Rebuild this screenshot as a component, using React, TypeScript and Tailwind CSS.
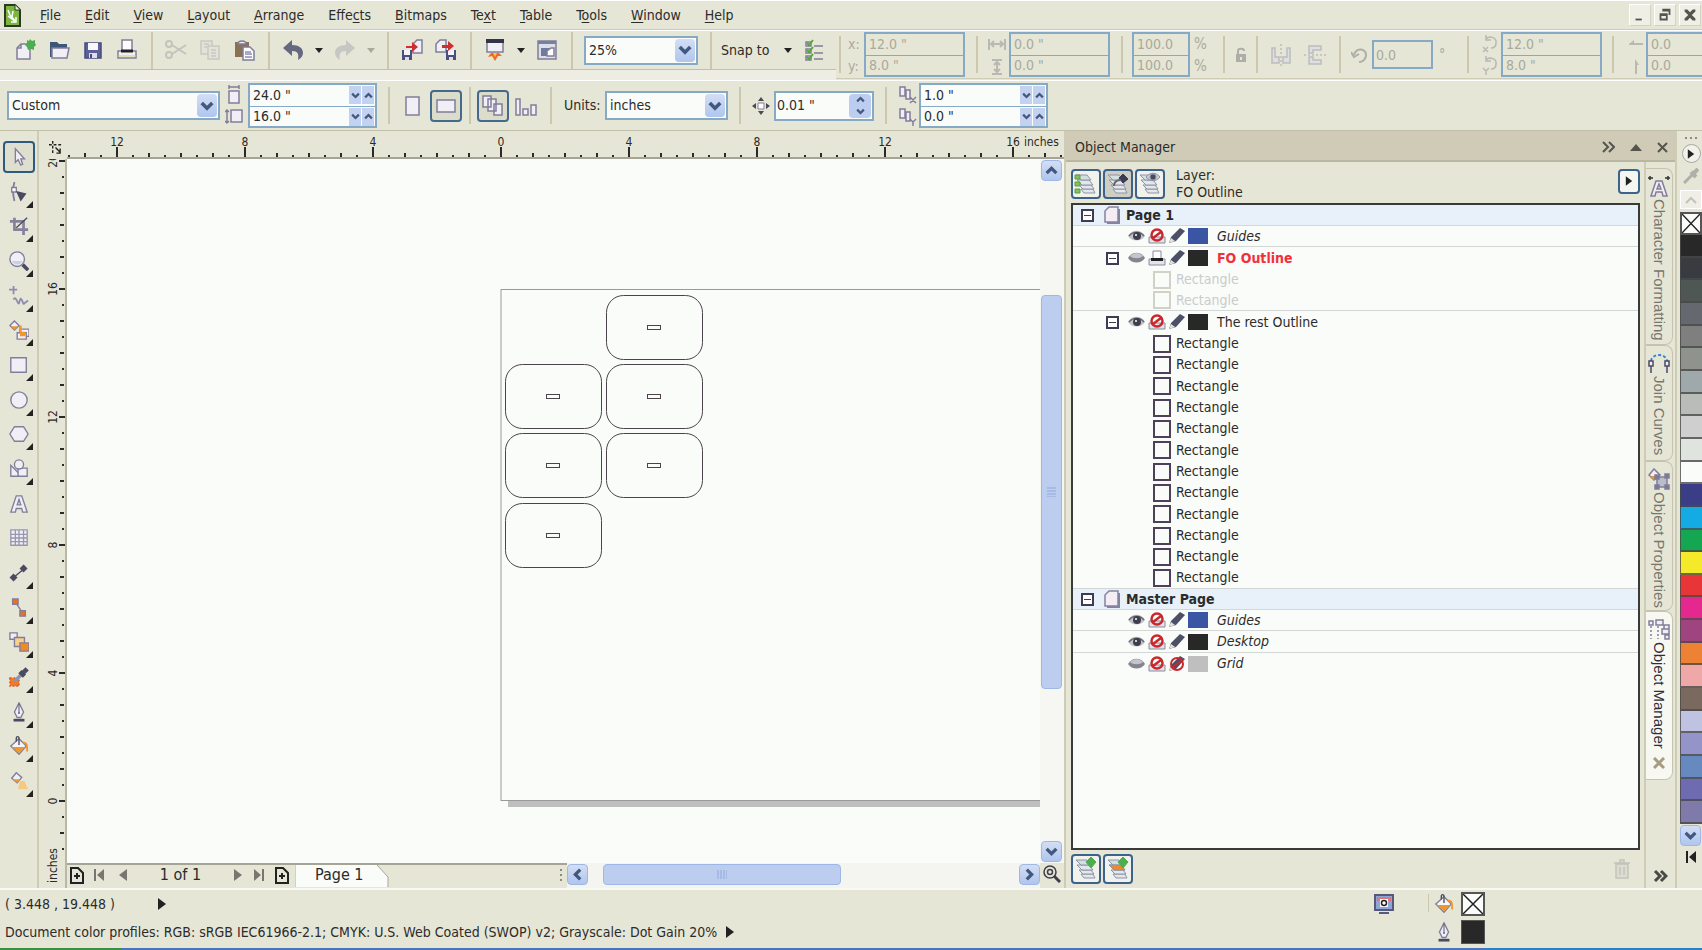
import { Fragment } from "react";
import type { ReactNode } from "react";

const LINE = "#807e99";
const PALE = "#f1eff6";
const DARK = "#4b4a63";

const menus = [
  ["", "F", "ile"],
  ["", "E", "dit"],
  ["", "V", "iew"],
  ["", "L", "ayout"],
  ["", "A", "rrange"],
  ["Effe", "c", "ts"],
  ["", "B", "itmaps"],
  ["Te", "x", "t"],
  ["", "T", "able"],
  ["T", "o", "ols"],
  ["", "W", "indow"],
  ["", "H", "elp"],
];

const palette = [
  "#282828", "#383c41", "#4e5754", "#65686e", "#7f7f7f", "#8f938e", "#9fa8aa", "#b8bdb8", "#cfcfcf",
  "#dfe4df", "#fafcfa", "#3b3e87", "#14aae3", "#15a652", "#f4ea29", "#e73538", "#e4288e", "#a0447f",
  "#ed8134", "#eda8a7", "#79695f", "#bfc3e1", "#9594c8", "#6689c0", "#6e6bb0", "#7e7aa9",
];

type Row = {
  kind: "page" | "layer" | "object";
  name: string;
  open?: boolean;
  eye?: boolean;
  print?: boolean;
  locked?: boolean;
  color?: string;
  look?: string;
  faded?: boolean;
  line?: boolean;
};

const restObjects: Row[] = Array.from({ length: 12 }, (_, i) => ({
  kind: "object",
  name: "Rectangle",
  line: i === 11,
}));

const rows: Row[] = [
  { kind: "page", name: "Page 1", line: true },
  { kind: "layer", name: "Guides", eye: true, color: "#3955a3", look: "italic", line: true },
  { kind: "layer", name: "FO Outline", open: true, print: true, color: "#282828", look: "font-bold text-[#f2303a]" },
  { kind: "object", name: "Rectangle", faded: true },
  { kind: "object", name: "Rectangle", faded: true, line: true },
  { kind: "layer", name: "The rest Outline", open: true, eye: true, color: "#282828", look: "" },
  ...restObjects,
  { kind: "page", name: "Master Page", line: true },
  { kind: "layer", name: "Guides", eye: true, color: "#3955a3", look: "italic", line: true },
  { kind: "layer", name: "Desktop", eye: true, color: "#282828", look: "italic", line: true },
  { kind: "layer", name: "Grid", locked: true, color: "#bfbfbf", look: "italic" },
];

function Ico({ size = 22, children }: { size?: number; children: ReactNode }) {
  return (
    <svg width={size} height={size} viewBox="0 0 22 22" fill={PALE} stroke={LINE} strokeWidth="1.5" className="shrink-0" aria-hidden="true">
      {children}
    </svg>
  );
}

function Sep({ className = "" }: { className?: string }) {
  return (
    <div className={`flex w-[15px] shrink-0 justify-center ${className}`}>
      <div className="h-[37px] w-[2px] bg-[#cbc8ae]" />
    </div>
  );
}

function ToolButton({ label, children, className = "w-[34px]" }: { label: string; children: ReactNode; className?: string }) {
  return (
    <button aria-label={label} className={`flex h-8 shrink-0 items-center justify-center ${className}`}>
      {children}
    </button>
  );
}

function Caret({ color = "#222" }: { color?: string }) {
  return (
    <svg width="8" height="5" viewBox="0 0 8 5" className="shrink-0" aria-hidden="true">
      <path d="M0 0h8L4 5z" fill={color} />
    </svg>
  );
}

function Chevron({ turn = "", size = 12 }: { turn?: string; size?: number }) {
  return (
    <svg width={size} height={size} viewBox="0 0 12 12" className={turn} fill="none" stroke="#42587f" strokeWidth="3" aria-hidden="true">
      <path d="M1.5 3.5L6 8l4.500-4.500" />
    </svg>
  );
}

function Play({ size = 10, flip = false, bar = false, color = "#222" }: { size?: number; flip?: boolean; bar?: boolean; color?: string }) {
  return (
    <svg width={size} height="14" viewBox="0 0 10 14" className={flip ? "rotate-180" : ""} fill={color} aria-hidden="true">
      <path d={bar ? "M0 1l7 6-7 6zM8 1h2v12h-2z" : "M1 1l8 6-8 6z"} />
    </svg>
  );
}

function Combo({ label, value, className }: { label: string; value: string; className: string }) {
  return (
    <div className={`relative h-[29px] shrink-0 border-2 border-[#86a9c6] bg-[#fafcfa] ${className}`}>
      <select aria-label={label} className="h-full w-full appearance-none bg-transparent pl-[3px] outline-none">
        <option>{value}</option>
      </select>
      <span className="pointer-events-none absolute inset-y-px right-px flex w-5 items-center justify-center rounded-sm bg-gradient-to-b from-[#d3def4] to-[#b0c6ee]">
        <Chevron size={14} />
      </span>
    </div>
  );
}

function Pair({ labels, values, className, off = false }: { labels: string[]; values: string[]; className: string; off?: boolean }) {
  return (
    <div className={`shrink-0 border-2 border-[#86a9c6] ${off ? "text-[#aaa99b]" : "bg-[#fafcfa]"} ${className}`}>
      {values.map((value, i) => (
        <div key={labels[i]} className={`flex h-5 items-center ${i ? "mt-px border-t border-[#86a9c6]" : ""}`}>
          <input
            aria-label={labels[i]}
            defaultValue={value}
            disabled={off}
            className="w-0 min-w-0 flex-1 bg-transparent pl-[3px] outline-none"
          />
          {!off && (
            <div className="flex gap-px pr-px">
              <button aria-label={`${labels[i]} down`} className="flex h-[18px] w-3 items-center justify-center bg-[#c3d2f0]">
                <Chevron size={9} />
              </button>
              <button aria-label={`${labels[i]} up`} className="flex h-[18px] w-3 items-center justify-center bg-[#c3d2f0]">
                <Chevron size={9} turn="rotate-180" />
              </button>
            </div>
          )}
        </div>
      ))}
    </div>
  );
}

function Layers({ children }: { children?: ReactNode }) {
  return (
    <svg width="24" height="24" viewBox="0 0 24 24" fill="#e3e7ea" stroke="#8d93a8" strokeWidth="1" aria-hidden="true">
      <path d="M7 17h12l2 4H10z" />
      <path d="M5 13h12l3 4H9z" />
      <path d="M3 8h12l4 5H8z" />
      <path d="M2 3h11l4 5H7z" fill="#d3e0e2" />
      {children}
    </svg>
  );
}

const smallDisk = (
  <g stroke="none">
    <path d="M0 0h10v10H0z" fill="#4a4f7d" />
    <path d="M2 0h6v5H2z" fill="#f4f4fa" />
    <path d="M3 7h4v3H3z" fill="#dcdcea" />
  </g>
);

const bucket = (
  <>
    <path d="M2 11l9-8 8 8-8 9z" fill="#f5f5fa" />
    <path d="M3 12h15l-7 7z" fill="#f0962a" stroke="none" />
    <path d="M11 10V3c0-3-3-3-3 0v3" fill="none" stroke={DARK} />
    <path d="M15 7c5 0 5 3 5 10" fill="none" stroke="#f0962a" strokeWidth="2" />
  </>
);

const nib = (
  <>
    <path d="M11 1l5 10-3 6H9l-3-6z" />
    <path d="M11 2v9" stroke={DARK} strokeWidth="1" />
    <circle cx="11" cy="12" r="1" fill={DARK} stroke="none" />
    <path d="M5 20h12" stroke={DARK} strokeWidth="3" />
  </>
);

const gripDots = (
  <svg width="14" height="4" fill="#8c8a7c" aria-hidden="true">
    <path d="M1 1h2v2H1zM6 1h2v2H6zM11 1h2v2h-2z" />
  </svg>
);

function MenuBar() {
  return (
    <nav className="flex h-[30px] shrink-0 items-center border-t border-b border-t-white border-b-[#cfccb6] pl-1">
      <svg width="17" height="23" viewBox="0 0 17 23" className="mr-[19px]" aria-hidden="true">
        <path d="M1 1h10l5 5v16H1z" fill="#7cb642" stroke="#2c3a23" strokeWidth="2" />
        <path d="M11 1v5h5" fill="#e9f3dc" stroke="#2c3a23" />
        <path d="M4 6l2 5 6 7M9 7l-1 6M4 12l8 6M12 13v5H7" fill="none" stroke="#fff" strokeWidth="1.500" />
      </svg>
      <div className="flex flex-1 gap-6">
        {menus.map(([a, b, c]) => (
          <button key={a + b + c} className="whitespace-pre">
            {a}
            <span className="underline underline-offset-2">{b}</span>
            {c}
          </button>
        ))}
      </div>
      <div className="flex gap-[3px] pr-px">
        {[
          ["Minimize", "M5 14h7v2H5z"],
          ["Restore", "M7 3h9v7h-2V6H7zM4 8h9v8H4zM6 11v3h5v-3z"],
          ["Close", "M4 4h3l3 3 3-3h3v2l-4 4 4 4v2h-3l-3-3-3 3H4v-2l4-4-4-4z"],
        ].map(([name, d]) => (
          <button key={name} aria-label={name} className="flex size-[22px] items-center justify-center border border-[#d5d2c4] border-t-white border-l-white bg-[#f0efe6]">
            <svg width="18" height="18" viewBox="0 0 20 20" fill="#55554d" fillRule="evenodd" aria-hidden="true">
              <path d={d} />
            </svg>
          </button>
        ))}
      </div>
    </nav>
  );
}

function StandardBar() {
  return (
    <div className="flex h-10 items-center border-t border-b border-t-white border-b-[#c3c0aa] pl-2">
      <ToolButton label="New">
        <Ico>
          <path d="M3 9l4-4h9v15H3z" />
          <path d="M7 5v4H3" fill="none" />
          <path d="M16 0l2 2 3-1v3l1 2-2 2v3l-3-1-3 1-1-3-2-2 2-2 0-3 2 1z" fill="#4cae50" stroke="none" />
        </Ico>
      </ToolButton>
      <ToolButton label="Open">
        <Ico>
          <path d="M2 3h7l2 2h8v13H2z" fill="#3d5578" stroke="none" />
          <path d="M4 9h17l-2 10H4z" />
        </Ico>
      </ToolButton>
      <ToolButton label="Save">
        <Ico>
          <path d="M3 4h16v15H3z" fill="#5c6299" stroke="#474c7c" />
          <path d="M6 4h10v7H6z" fill="#f7f7fc" stroke="none" />
          <path d="M7 14h8v5H7z" fill="#dcdcea" stroke="none" />
          <path d="M8 15h2v4H8z" fill="#474c7c" stroke="none" />
        </Ico>
      </ToolButton>
      <ToolButton label="Print">
        <Ico>
          <path d="M6 1h10v12H6z" fill="#fdfdff" />
          <path d="M2 12h18v7H2z" />
          <path d="M5 12h12" stroke="#222" strokeWidth="3" />
          <path d="M2 17h18" stroke="#d8cf6a" strokeWidth="1" />
        </Ico>
      </ToolButton>
      <Sep />
      <ToolButton label="Cut">
        <Ico>
          <g fill="none" stroke="#c4c4bc" strokeWidth="2">
            <circle cx="4" cy="5" r="3" />
            <circle cx="4" cy="16" r="3" />
            <path d="M7 6l14 9M7 15l14-9" />
          </g>
        </Ico>
      </ToolButton>
      <ToolButton label="Copy">
        <Ico>
          <g fill="#e3e3da" stroke="#c9c9c0">
            <path d="M2 2h11v13H2z" />
            <path d="M9 7h11v13H9z" />
            <path d="M12 11h5M12 14h5M12 17h5M5 5h5M5 8h3" />
          </g>
        </Ico>
      </ToolButton>
      <ToolButton label="Paste">
        <Ico>
          <path d="M2 3h14v15H2z" fill="#8a7152" stroke="none" />
          <path d="M5 5c0-4 8-4 8 0z" fill="#eee" />
          <path d="M10 8h7l4 4v9H10z" fill="#fbfbff" />
          <path d="M12 13h6M12 15h7M12 18h7" stroke="#555b8d" strokeWidth="1" />
        </Ico>
      </ToolButton>
      <Sep />
      <ToolButton label="Undo">
        <Ico>
          <path d="M1 9l9-8v5c7 0 11 3 11 8 0 3-2 5-5 7 1-6 0-9-6-9v5z" fill="#666880" stroke="none" />
        </Ico>
      </ToolButton>
      <ToolButton label="Undo list" className="w-[18px]">
        <Caret />
      </ToolButton>
      <ToolButton label="Redo">
        <Ico>
          <path d="M21 9l-9-8v5C5 6 1 9 1 14c0 3 2 5 5 7-1-6 0-9 6-9v5z" fill="#c6c7c2" stroke="none" />
        </Ico>
      </ToolButton>
      <ToolButton label="Redo list" className="w-[18px]">
        <Caret color="#aaa99b" />
      </ToolButton>
      <Sep />
      <ToolButton label="Import">
        <Ico>
          <path d="M12 5l4-4h5v13h-9z" />
          <g transform="translate(1 11)">{smallDisk}</g>
          <path d="M5 7h6V3l6 5-6 5V9H5z" fill="#cf2e31" stroke="none" />
        </Ico>
      </ToolButton>
      <ToolButton label="Export">
        <Ico>
          <path d="M1 5l4-4h6v12H1z" />
          <g transform="translate(11 11)">{smallDisk}</g>
          <path d="M7 6h6V2l6 5-6 5V9H7z" fill="#cf2e31" stroke="none" />
        </Ico>
      </ToolButton>
      <Sep />
      <ToolButton label="Application launcher">
        <Ico>
          <path d="M3 2h16v11H3z" />
          <path d="M2 0h18v4H2z" fill="#33334a" stroke="none" />
          <path d="M7 14h8l3 3-4 0-3 5-3-5-4 1z" fill="#ef6a23" stroke="none" />
          <path d="M9 14h4l-2 4z" fill="#f9c53a" stroke="none" />
        </Ico>
      </ToolButton>
      <ToolButton label="Launcher list" className="w-[18px]">
        <Caret />
      </ToolButton>
      <ToolButton label="Welcome screen">
        <Ico>
          <path d="M2 2h18v18H2z" fill="#dcdfea" />
          <path d="M2 2h18v3H2z" fill="#76809f" stroke="none" />
          <path d="M5 9h12v8H5z" fill="#6f7a9c" stroke="none" />
          <path d="M11 12l4-3h3v8h-7z" fill="#fff" />
        </Ico>
      </ToolButton>
      <Sep />
      <Combo label="Zoom levels" value="25%" className="ml-[5px] w-[114px]" />
      <Sep className="ml-[5px]" />
      <button className="flex w-[77px] items-center justify-between px-[3px] whitespace-nowrap">
        Snap to
        <Caret />
      </button>
      <ToolButton label="Options" className="ml-[3px] w-[34px]">
        <Ico>
          <path d="M2 3h5v4H2zM2 10h5v4H2zM2 17h5v4H2z" fill="#e6f0e0" />
          <path d="M10 7h9M10 14h9M10 20h9" />
          <path d="M3 4l2 2 4-5M3 11l2 2 4-5M3 18l2 2 4-5" fill="none" stroke="#58a63a" strokeWidth="2" />
        </Ico>
      </ToolButton>
    </div>
  );
}

function ObjectBar() {
  return (
    <div className="flex h-[49px] min-w-0 flex-1 items-center overflow-hidden border-t border-b border-t-white border-b-[#cfccb6] text-[#aaa99b]">
      <Sep className="-ml-1" />
      <div className="flex w-[17px] shrink-0 flex-col gap-[2px] pl-px leading-5">
        <span>x:</span>
        <span>y:</span>
      </div>
      <Pair off labels={["X position", "Y position"]} values={['12.0 "', '8.0 "']} className="w-[101px]" />
      <Sep className="ml-1" />
      <svg width="20" height="42" viewBox="0 0 20 42" className="mr-[2px] ml-[3px] shrink-0" fill="none" stroke="#b9b8b4" strokeWidth="2" aria-hidden="true">
        <path d="M2 5v11M18 5v11M4 10h12M7 7l-3 3 3 3M13 7l3 3-3 3" />
        <path d="M5 26h10M5 40h10M10 28v10M7 31l3-3 3 3M7 35l3 3 3-3" />
      </svg>
      <Pair off labels={["Object width", "Object height"]} values={['0.0 "', '0.0 "']} className="w-[101px]" />
      <Sep className="ml-1" />
      <Pair off labels={["Scale horizontal", "Scale vertical"]} values={["100.0", "100.0"]} className="ml-[3px] w-[58px]" />
      <div className="flex w-5 shrink-0 flex-col gap-[2px] pl-1 text-[15px] leading-5">
        <span>%</span>
        <span>%</span>
      </div>
      <Sep className="ml-[6px]" />
      <button aria-label="Lock ratio" disabled className="flex w-5 shrink-0 justify-center">
        <svg width="12" height="16" viewBox="0 0 12 16" aria-hidden="true">
          <path d="M1 7h10v8H1z" fill="#aeada8" />
          <path d="M3 7V4c0-3 6-3 6 0" fill="none" stroke="#aeada8" strokeWidth="2" />
          <path d="M5 10h2v3H5z" fill="#e6e6d6" />
        </svg>
      </button>
      <Sep className="-ml-[2px]" />
      <button aria-label="Mirror horizontally" disabled className="flex w-[34px] shrink-0 justify-center">
        <svg width="22" height="22" viewBox="0 0 22 22" fill="#dedfe0" stroke="#bdbdc0" strokeWidth="1.500" aria-hidden="true">
          <path d="M2 4h3v9h4v6H2zM20 4h-3v9h-4v6h7z" />
          <path d="M11 0v22" strokeDasharray="2 2" />
        </svg>
      </button>
      <button aria-label="Mirror vertically" disabled className="flex w-[34px] shrink-0 justify-center">
        <svg width="22" height="22" viewBox="0 0 22 22" fill="#dedfe0" stroke="#bdbdc0" strokeWidth="1.500" aria-hidden="true">
          <path d="M5 2h12v4H9v3H5zM5 20h12v-4H9v-3H5z" />
          <path d="M0 11h22" strokeDasharray="2 2" />
        </svg>
      </button>
      <Sep />
      <svg width="18" height="18" viewBox="0 0 18 18" className="mr-[3px] ml-1 shrink-0" fill="none" stroke="#aeada8" strokeWidth="2" aria-hidden="true">
        <path d="M3 9c2-8 13-7 12 1-1 4-4 6-7 6" />
        <path d="M0 6l3 5 5-3" />
      </svg>
      <input aria-label="Angle of rotation" disabled defaultValue="0.0" className="h-[29px] w-[61px] shrink-0 border-2 border-[#86a9c6] pl-[2px]" />
      <span className="w-6 shrink-0 pl-[6px]">°</span>
      <Sep className="ml-[3px]" />
      <svg width="22" height="42" viewBox="0 0 22 42" className="ml-1 shrink-0" fill="none" stroke="#b9b8b4" strokeWidth="1.500" aria-hidden="true">
        <path d="M7 5c4-4 11-1 10 4 0 4-3 5-5 5M7 1v5h5M4 13l5 5M9 13l-5 5" />
        <path d="M7 26c4-4 11-1 10 4 0 4-3 5-5 5M7 22v5h5M4 34l3 3 3-3M7 37v4" />
      </svg>
      <Pair off labels={["Center X", "Center Y"]} values={['12.0 "', '8.0 "']} className="w-[101px]" />
      <Sep className="ml-[3px]" />
      <svg width="18" height="42" viewBox="0 0 18 42" className="mr-px ml-[7px] shrink-0" fill="#b9b8b4" aria-hidden="true">
        <path d="M2 10l5-4v3h9v2H2zM8 25l4 6h-2v9H8z" />
      </svg>
      <Pair off labels={["Skew X", "Skew Y"]} values={["0.0", "0.0"]} className="w-[101px]" />
    </div>
  );
}

function PropertyBar() {
  return (
    <div className="flex h-[51px] shrink-0 items-center border-t border-b border-t-white border-b-[#c3c0aa] pl-[7px]">
      <Combo label="Paper type" value="Custom" className="w-[213px]" />
      <svg width="18" height="42" viewBox="0 0 18 42" className="mx-[5px] shrink-0" fill={PALE} stroke={LINE} strokeWidth="1.500" aria-hidden="true">
        <path d="M4 6h10v12H4zM4 2h10M4 0v4M14 0v4" />
        <path d="M6 25h11v12H6zM2 25v13M0 27l2-2 2 2M0 36l2 2 2-2" />
      </svg>
      <Pair labels={["Page width", "Page height"]} values={['24.0 "', '16.0 "']} className="w-[129px]" />
      <Sep className="ml-1" />
      <ToolButton label="Portrait" className="w-[34px]">
        <Ico>
          <path d="M4 2h13v18H4z" />
        </Ico>
      </ToolButton>
      <button aria-label="Landscape" className="flex size-8 items-center justify-center rounded border-2 border-[#466a8d] bg-[#dcdccb]">
        <Ico>
          <path d="M2 5h18v12H2z" />
        </Ico>
      </button>
      <Sep />
      <button aria-label="Apply to all pages" className="flex size-8 items-center justify-center rounded border-2 border-[#466a8d] bg-[#dcdccb]">
        <Ico>
          <path d="M1 1h8v11H1zM6 4h8v12H6zM12 9h8v11h-8z" />
        </Ico>
      </button>
      <ToolButton label="Apply to current page">
        <Ico>
          <path d="M1 4h4v16H1zM8 14h5v6H8zM16 10h5v10h-5z" />
        </Ico>
      </ToolButton>
      <Sep />
      <span className="ml-[6px] w-[41px] whitespace-nowrap">Units:</span>
      <Combo label="Units" value="inches" className="w-[123px]" />
      <Sep className="ml-1" />
      <svg width="18" height="18" viewBox="0 0 18 18" className="mr-1 ml-[5px] shrink-0" fill="#4a4a52" aria-hidden="true">
        <path d="M6 6h6v6H6z" fill="#fff" stroke={LINE} />
        <path d="M9 0l3 4H6zM9 18l3-4H6zM0 9l4-3v6zM18 9l-4-3v6z" />
      </svg>
      <div className="flex h-[30px] w-[100px] shrink-0 border-2 border-[#86a9c6] bg-[#fafcfa]">
        <input aria-label="Nudge distance" defaultValue={'0.01 "'} className="w-0 flex-1 bg-transparent pl-px outline-none" />
        <div className="my-px mr-px flex w-[22px] flex-col rounded-sm bg-[#bccdf0]">
          <button aria-label="Nudge up" className="flex flex-1 items-center justify-center">
            <Chevron size={9} turn="rotate-180" />
          </button>
          <button aria-label="Nudge down" className="flex flex-1 items-center justify-center">
            <Chevron size={9} />
          </button>
        </div>
      </div>
      <Sep className="ml-1" />
      <svg width="18" height="42" viewBox="0 0 18 42" className="mr-[2px] ml-[6px] shrink-0" fill={PALE} stroke={LINE} strokeWidth="1.500" aria-hidden="true">
        <path d="M1 2h5v9H1zM7 5h4v9H7zM11 12l6 6M17 12l-6 6" />
        <path d="M1 24h5v9H1zM7 27h4v9H7zM11 34l3 3 3-3M14 37v4" />
      </svg>
      <Pair labels={["Duplicate X", "Duplicate Y"]} values={['1.0 "', '0.0 "']} className="w-[129px]" />
    </div>
  );
}

const tools: { name: string; flyout: boolean; art: ReactNode }[] = [
  { name: "Pick", flyout: false, art: <path d="M7 2v15l3-3 3 6 2-1-2-6h4z" /> },
  {
    name: "Shape",
    flyout: true,
    art: (
      <>
        <path d="M6 0c-2 7-2 14 0 21" fill="none" strokeWidth="2" />
        <path d="M3 6h5v5H3z" fill="#fff" />
        <path d="M9 11l9 2-5 7z" fill={DARK} stroke={DARK} />
      </>
    ),
  },
  {
    name: "Crop",
    flyout: true,
    art: (
      <>
        <path d="M1 6h15v15M6 2v13h15" fill="none" strokeWidth="3" stroke="#85839b" />
        <path d="M8 13L20 2" fill="none" stroke={DARK} />
      </>
    ),
  },
  {
    name: "Zoom",
    flyout: true,
    art: (
      <>
        <path d="M15 15l6 6" strokeWidth="4" stroke={DARK} />
        <circle cx="9" cy="9" r="8" />
        <path d="M3 11h12c-2 5-10 5-12 0z" fill="#c9d0e8" stroke="none" />
      </>
    ),
  },
  {
    name: "Freehand",
    flyout: true,
    art: (
      <g fill="none" stroke="#8f8dae">
        <path d="M5 0v9M0 4h9" strokeWidth="2" />
        <path d="M5 15c2-6 5 6 6 4s1-7 3-4 1 6 3 4l4-3" strokeWidth="2" />
      </g>
    ),
  },
  {
    name: "Smart fill",
    flyout: true,
    art: (
      <>
        <path d="M6 1l5 5-5 5-5-5z" />
        <path d="M2 7h8l-4 4z" fill="#f0962a" stroke="none" />
        <path d="M12 10h10v8H12z" fill="#f4f2fa" />
        <path d="M9 14h10v7H9z" />
        <path d="M11 6h3v7h4v5h-6v-5h-1z" fill="#f0962a" stroke="none" />
      </>
    ),
  },
  { name: "Rectangle", flyout: true, art: <path d="M2 3h17v16H2z" /> },
  { name: "Ellipse", flyout: true, art: <circle cx="11" cy="11" r="9" /> },
  { name: "Polygon", flyout: true, art: <path d="M6 3h10l5 8-5 8H6l-5-8z" /> },
  {
    name: "Basic shapes",
    flyout: true,
    art: (
      <>
        <path d="M2 7v12h12z" />
        <path d="M10 10h10v9H10z" />
        <circle cx="11" cy="6" r="5" />
      </>
    ),
  },
  { name: "Text", flyout: false, art: <path d="M2 20L8 2h6l6 18h-5l-1-4H8l-1 4zM9 12h4l-2-6z" fillRule="evenodd" /> },
  { name: "Table", flyout: false, art: <path d="M2 2h18v17H2zM2 7h18M2 11h18M2 15h18M7 2v17M11 2v17M16 2v17" stroke="#9997b0" /> },
  {
    name: "Dimension",
    flyout: true,
    art: (
      <g fill={DARK} stroke={DARK}>
        <path d="M5 16L17 6" />
        <path d="M16 3l3 3-3 3-3-3zM5 13l3 3-3 3-3-3z" strokeWidth="2" />
      </g>
    ),
  },
  {
    name: "Connector",
    flyout: true,
    art: (
      <g fill="#ee6e25">
        <path d="M8 6l6 9" fill="none" stroke={LINE} />
        <path d="M4 1h6v6H4zM12 14h6v6h-6z" />
      </g>
    ),
  },
  {
    name: "Blend",
    flyout: true,
    art: (
      <>
        <path d="M1 1h8v7H1z" />
        <path d="M6 6h11v10H6z" fill="#f8cf8b" />
        <path d="M12 12h10v9H12z" fill="#f08a28" />
      </>
    ),
  },
  {
    name: "Color eyedropper",
    flyout: true,
    art: (
      <>
        <path d="M1 12h10v9H1z" fill="#ef7a2a" stroke="#d9562b" strokeDasharray="2 2" />
        <path d="M6 16l8-8" strokeWidth="4" stroke="#8d95b5" />
        <path d="M12 5l5 5M16 6l4-4" strokeWidth="5" stroke={DARK} />
      </>
    ),
  },
  { name: "Outline", flyout: true, art: nib },
  { name: "Fill", flyout: true, art: bucket },
  {
    name: "Interactive fill",
    flyout: true,
    art: (
      <>
        <path d="M8 2l6 5-5 6-6-5z" />
        <path d="M4 9h9l-4 4z" fill="#f0962a" stroke="none" />
        <path d="M12 11h5l4 9H10z" fill="#f6c983" stroke="none" />
      </>
    ),
  },
];

function Toolbox() {
  return (
    <aside className="w-[39px] shrink-0 border-r-2 border-[#cfccb6] pt-2 pl-[3px]">
      {tools.map((t, i) => (
        <div key={t.name} className="flex h-[35px] items-center nth-[3n]:h-[34px]">
          <button
            aria-label={t.name}
            className={`relative flex size-8 items-center justify-center ${i === 0 ? "rounded border-2 border-[#2f5a80] bg-[#dfdfd0]" : ""}`}
          >
            <Ico size={20}>{t.art}</Ico>
            {t.flyout && (
              <svg width="7" height="7" className="absolute right-[2px] bottom-0" aria-hidden="true">
                <path d="M7 0v7H0z" fill="#222" />
              </svg>
            )}
          </button>
        </div>
      ))}
    </aside>
  );
}

// 32 px per inch, the horizontal zero sits at x = 434 of the canvas
function HorizontalRuler() {
  const ticks = Array.from({ length: 63 }, (_, i) => i - 27);
  return (
    <svg width="100%" height="28" className="block" fontSize="12" fill="#2a2a2a" aria-hidden="true">
      {ticks.map((t) => {
        const x = 434 + t * 16;
        if (t % 8 === 0) {
          return (
            <Fragment key={t}>
              <rect x={x - 1} y="16" width="2" height="10" />
              <text x={x} y="15" textAnchor="middle">
                {Math.abs(t / 2)}
              </text>
            </Fragment>
          );
        }
        return <rect key={t} x={x - 1} y={t % 2 ? 24 : 22} width="2" height={t % 2 ? 2 : 4} />;
      })}
      <text x="957" y="15">
        inches
      </text>
    </svg>
  );
}

function VerticalRuler() {
  const ticks = Array.from({ length: 44 }, (_, i) => i - 3);
  return (
    <svg width="27" height="100%" className="block" fontSize="12" fill="#2a2a2a" aria-hidden="true">
      {ticks.map((t) => {
        const y = 642 - t * 16;
        if (t % 8 === 0) {
          return (
            <Fragment key={t}>
              <rect x="20" y={y - 1} width="6" height="2" />
              <text transform={`translate(18 ${y}) rotate(-90)`} textAnchor="middle">
                {t / 2}
              </text>
            </Fragment>
          );
        }
        return <rect key={t} x={t % 2 ? 23 : 21} y={y - 1} width={t % 2 ? 2 : 4} height="2" />;
      })}
    </svg>
  );
}

const cards = [
  [539, 136],
  [438, 205],
  [539, 205],
  [438, 274],
  [539, 274],
  [438, 344],
];

function Drawing() {
  return (
    <svg width="100%" height="100%" className="block" fill="none" aria-label="Drawing page">
      <rect x="441" y="641" width="761" height="7" fill="#bfbfbf" />
      <rect x="434" y="130.5" width="768" height="511" fill="#fafcf9" stroke="#9a9a9a" />
      {cards.map(([x, y]) => (
        <g key={`${x}-${y}`} stroke="#4a444a">
          <rect x={x + 0.5} y={y + 0.5} width="96" height="64" rx="17" />
          <rect x={x + 41.5} y={y + 30.5} width="13" height="4" />
        </g>
      ))}
    </svg>
  );
}

function ScrollButton({ label, turn = "" }: { label: string; turn?: string }) {
  return (
    <button aria-label={label} className="flex size-[21px] shrink-0 items-center justify-center rounded-sm border border-[#9db8e4] bg-gradient-to-b from-[#d3def4] to-[#b0c6ee]">
      <Chevron turn={turn} size={13} />
    </button>
  );
}

function AddPage() {
  return (
    <svg width="14" height="17" viewBox="0 0 14 17" fill="none" stroke="#222" strokeWidth="2" aria-hidden="true">
      <path d="M1 1h7l5 5v10H1zM4 9h6M7 6v6" />
    </svg>
  );
}

function PageNavigator() {
  return (
    <div className="flex h-[25px] items-stretch">
      <div className="flex w-[500px] shrink-0 items-center border-t-2 border-[#a5a496] pb-[3px] pl-[3px]">
        <button aria-label="Add page before" className="flex w-[14px]"><AddPage /></button>
        <button aria-label="First page" className="ml-[10px] flex"><Play flip bar color="#77776f" /></button>
        <button aria-label="Previous page" className="ml-[14px] flex"><Play flip color="#77776f" /></button>
        <span className="w-[105px] text-center text-[16px] leading-5">1 of 1</span>
        <button aria-label="Next page" className="flex"><Play color="#77776f" /></button>
        <button aria-label="Last page" className="ml-[11px] flex"><Play bar color="#77776f" /></button>
        <button aria-label="Add page after" className="ml-[11px] flex w-[14px]"><AddPage /></button>
        <button className="relative ml-[6px] flex h-5 w-[94px] items-center pl-5 text-[16px] leading-5">
          <svg width="94" height="22" className="absolute inset-0" aria-hidden="true">
            <path d="M0 0h82l11 12v10H0z" fill="#fafcf9" />
            <path d="M0 0v22M82 0l11 12v10" fill="none" stroke="#a5a496" />
          </svg>
          <span className="relative">Page 1</span>
        </button>
        <svg width="4" height="14" className="mr-1 ml-auto" fill="#8c8a7c" aria-hidden="true">
          <path d="M1 1h2v2H1zM1 6h2v2H1zM1 11h2v2H1z" />
        </svg>
      </div>
      <div className="flex flex-1 items-start gap-[15px] bg-[#f4f5f1] pt-px">
        <ScrollButton label="Scroll left" turn="rotate-90" />
        <div className="flex h-[21px] w-[25%] min-w-[238px] items-center justify-center rounded-sm border border-[#9db8e4] bg-[#bccdf0]">
          <svg width="10" height="9" stroke="#8fa9da" aria-hidden="true">
            <path d="M1 0v9M4 0v9M7 0v9M10 0v9" />
          </svg>
        </div>
        <div className="ml-auto flex">
          <ScrollButton label="Scroll right" turn="-rotate-90" />
        </div>
      </div>
      <button aria-label="Navigator" className="flex w-[24px] items-center justify-center pb-[3px]">
        <svg width="18" height="18" viewBox="0 0 18 18" fill="none" stroke="#3e3e4a" strokeWidth="1.500" aria-hidden="true">
          <circle cx="7" cy="7" r="6" />
          <circle cx="7" cy="7" r="2.500" />
          <path d="M11 11l6 6" strokeWidth="3" />
        </svg>
      </button>
    </div>
  );
}

function Workspace() {
  return (
    <main className="grid min-w-0 flex-1 grid-cols-[28px_1fr] grid-rows-[28px_1fr_25px] border-r-2 border-[#cfccb6]">
      <div className="flex items-center justify-center pt-1 pl-1">
        <svg width="13" height="13" viewBox="0 0 14 14" fill="none" stroke="#222" strokeWidth="1.500" aria-hidden="true">
          <path d="M0 4h14M4 0v14" strokeDasharray="3 2" />
          <path d="M7 7l5 5M12 8v5H8" />
        </svg>
      </div>
      <div className="min-w-0 overflow-hidden border-b-2 border-[#a5a496]">
        <HorizontalRuler />
      </div>
      <div className="relative row-span-2 min-h-0 overflow-hidden border-r-2 border-[#bab8a4]">
        <VerticalRuler />
        <span className="absolute bottom-[5px] left-[6px] rotate-180 bg-[#e6e6d6] text-[12px] leading-4 [writing-mode:vertical-rl]">inches</span>
      </div>
      <div className="flex min-h-0 min-w-0">
        <div className="min-w-0 flex-1 bg-[#fafcf9]">
          <Drawing />
        </div>
        <div className="flex w-[24px] flex-col bg-[#f6f6f3] pt-px pl-px">
          <ScrollButton label="Scroll up" turn="rotate-180" />
          <div className="mt-[114px] flex h-[56%] w-[21px] items-center justify-center rounded-sm border border-[#9db8e4] bg-[#bccdf0]">
            <svg width="9" height="10" stroke="#8fa9da" aria-hidden="true">
              <path d="M0 1h9M0 4h9M0 7h9M0 10h9" />
            </svg>
          </div>
          <div className="mt-auto pb-px">
            <ScrollButton label="Scroll down" />
          </div>
        </div>
      </div>
      <PageNavigator />
    </main>
  );
}

function Eye({ open }: { open?: boolean }) {
  return (
    <svg width="17" height="12" viewBox="0 0 17 12" className="shrink-0" aria-hidden="true">
      <path d="M0 6c4-7 13-7 17 0-4 6-13 6-17 0z" fill={open ? "#c3c2cb" : "#85858f"} />
      {open ? (
        <>
          <path d="M1 6c4-5 11-5 15 0" fill="none" stroke="#6d6c7c" strokeWidth="1.500" />
          <circle cx="9" cy="6" r="4" fill="#3f3e4c" />
          <circle cx="8" cy="5" r="1" fill="#fff" />
        </>
      ) : (
        <path d="M2 4c4-4 9-4 13 0-3 3-10 3-13 0z" fill="#c4c4ca" />
      )}
    </svg>
  );
}

function PrintState({ on }: { on?: boolean }) {
  return (
    <svg width="18" height="16" viewBox="0 0 18 16" className="shrink-0" aria-hidden="true">
      <path d="M1 9h16v6H1z" fill="#e4e3ec" stroke="#8b8a9c" />
      {on ? (
        <>
          <path d="M5 1h8v8H5z" fill="#fff" stroke="#8b8a9c" />
          <path d="M3 8h12v3H3z" fill="#222" />
        </>
      ) : (
        <g fill="none" stroke="#c9282c" strokeWidth="2.500">
          <circle cx="9" cy="7" r="5.500" />
          <path d="M5 10l8-6" />
        </g>
      )}
    </svg>
  );
}

function Pencil({ locked }: { locked?: boolean }) {
  return (
    <svg width="16" height="16" viewBox="0 0 16 16" className="shrink-0" aria-hidden="true">
      <path d="M0 15l2-6L11 0l5 3-9 10z" fill="#4c4f66" />
      <path d="M0 15l2-5 4 3z" fill="#e6e0d8" />
      {locked && (
        <g fill="none" stroke="#c9282c" strokeWidth="2">
          <circle cx="8" cy="8" r="6" />
          <path d="M4 11l8-6" />
        </g>
      )}
    </svg>
  );
}

function Expander() {
  return (
    <button aria-label="Collapse" className="flex size-[13px] shrink-0 items-center justify-center border-2 border-[#3c3c55] bg-white">
      <span className="h-px w-[7px] bg-[#3c3c55]" />
    </button>
  );
}

function TreeRow({ row }: { row: Row }) {
  const line = row.line ? "border-b border-[#d3d7d5]" : "";
  const base = "flex h-[21px] shrink-0 items-center whitespace-nowrap nth-[3n]:h-[22px]";
  if (row.kind === "page") {
    return (
      <li className={`${base} bg-[#e8f0f9] pl-2 ${line}`}>
        <Expander />
        <svg width="16" height="18" viewBox="0 0 16 18" className="mr-[6px] ml-[10px] shrink-0" aria-hidden="true">
          <path d="M5 1h9v15H1V5z" fill="#f4eef4" stroke="#8483a0" strokeWidth="1.500" />
          <path d="M15 3v14H3" fill="none" stroke="#8483a0" strokeWidth="2" />
        </svg>
        <span className="font-bold">{row.name}</span>
      </li>
    );
  }
  if (row.kind === "object") {
    return (
      <li className={`${base} pl-20 ${row.faded ? "text-[#c9ccca]" : ""} ${line}`}>
        <span className={`mr-[5px] size-[18px] border-2 ${row.faded ? "border-[#d2d1c8]" : "border-[#4d4159]"}`} />
        {row.name}
      </li>
    );
  }
  return (
    <li className={`${base} pl-[33px] ${line}`}>
      <span className="mr-[9px] flex w-[13px]">{row.open && <Expander />}</span>
      <Eye open={row.eye} />
      <span className="mr-[3px] ml-[3px] flex"><PrintState on={row.print} /></span>
      <Pencil locked={row.locked} />
      <span className="mr-[9px] ml-[3px] h-4 w-5 shrink-0" style={{ backgroundColor: row.color }} />
      <span className={row.look}>{row.name}</span>
    </li>
  );
}

function PanelButton({ label, pressed = false, children }: { label: string; pressed?: boolean; children: ReactNode }) {
  return (
    <button aria-label={label} className={`flex size-[30px] items-center justify-center rounded border-2 border-[#3d628b] ${pressed ? "bg-[#cfcec2]" : "bg-[#f1f2ec]"}`}>
      {children}
    </button>
  );
}

function DockerTabs() {
  const tab = "flex w-[27px] flex-col items-center rounded-tr-lg rounded-br-lg border border-l-0 border-[#c6c4b0] pt-[6px]";
  const label = "mt-[2px] text-[15px] leading-5 [writing-mode:vertical-rl] whitespace-nowrap";
  return (
    <div className="flex w-[31px] shrink-0 flex-col border-l-2 border-[#cfccb6] pt-[6px] font-['Liberation_Sans',sans-serif] text-[#77766e]">
      <button className={`${tab} h-[177px]`}>
        <Ico>
          <path d="M3 21L8 6h6l5 15h-4l-1-4H8l-1 4zM9 14h4l-2-5z" fillRule="evenodd" />
          <path d="M0 3h5M2 1v4M17 3h5M20 1v4" stroke="#333" />
        </Ico>
        <span className={label}>Character Formatting</span>
      </button>
      <button className={`${tab} h-[116px]`}>
        <Ico>
          <path d="M3 9C4 1 18 1 19 9" fill="none" stroke="#2f86d8" strokeWidth="2" strokeDasharray="3 2" />
          <path d="M1 9h4v5H1zM17 9h4v5h-4zM3 14v7M19 14v7" stroke={DARK} />
        </Ico>
        <span className={label}>Join Curves</span>
      </button>
      <button className={`${tab} h-[150px]`}>
        <Ico>
          <path d="M1 7l5-6 6 6-6 5z" />
          <path d="M2 8h9l-5 4z" fill="#f0962a" stroke="none" />
          <path d="M9 9h10v10H9z" fill="#b9bccb" />
          <path d="M7 7h4v4H7zM17 6h4v4h-4zM7 17h4v4H7zM17 17h4v4h-4z" fill="#777b93" />
        </Ico>
        <span className={label}>Object Properties</span>
      </button>
      <button className={`${tab} h-[169px] bg-[#f8f8f3] text-[#2e2e3a]`}>
        <Ico>
          <path d="M1 3h4v4H1zM8 2h7v5H8zM16 7h5v4h-5zM14 11h7v5h-7zM17 17h4v4h-4z" />
          <path d="M3 8v13M10 8v13" strokeDasharray="2 2" />
        </Ico>
        <span className={label}>Object Manager</span>
        <svg width="12" height="12" viewBox="0 0 12 12" className="mt-auto mb-[10px]" stroke="#a89c80" strokeWidth="3" aria-hidden="true">
          <path d="M1 1l10 10M11 1L1 11" />
        </svg>
      </button>
      <button aria-label="More dockers" className="mt-auto mb-1 ml-[7px] flex">
        <svg width="15" height="16" viewBox="0 0 15 16" fill="none" stroke="#4a4a44" strokeWidth="3" aria-hidden="true">
          <path d="M2 3l5 5-5 5M8 3l5 5-5 5" />
        </svg>
      </button>
    </div>
  );
}

function ObjectManager() {
  return (
    <section className="flex w-[611px] shrink-0 flex-col border-r-2 border-[#cfccb6]">
      <header className="flex h-[31px] shrink-0 items-center border-b-2 border-[#b9b6a2] bg-[#cfcbb7] pt-[3px] pl-[9px]">
        <h2 className="flex-1">Object Manager</h2>
        <button aria-label="Collapse docker" className="mr-[15px] flex">
          <svg width="13" height="12" viewBox="0 0 13 12" fill="none" stroke="#55554d" strokeWidth="2" aria-hidden="true">
            <path d="M1 1l5 5-5 5M7 1l5 5-5 5" />
          </svg>
        </button>
        <button aria-label="Roll up" className="mr-[15px] flex">
          <svg width="12" height="7" fill="#55554d" aria-hidden="true"><path d="M6 0l6 7H0z" /></svg>
        </button>
        <button aria-label="Close docker" className="mr-[7px] flex">
          <svg width="11" height="11" viewBox="0 0 11 11" stroke="#55554d" strokeWidth="2" aria-hidden="true">
            <path d="M1 1l9 9M10 1l-9 9" />
          </svg>
        </button>
      </header>
      <div className="flex min-h-0 flex-1">
        <div className="flex flex-1 flex-col pr-1 pl-[5px]">
          <div className="flex h-[41px] shrink-0 items-center gap-[2px] pt-[2px]">
            <PanelButton label="Show object properties">
              <Layers>
                <path d="M1 3h5v4H1zM1 10h5v4H1zM1 17h5v4H1z" fill="#7fc35c" stroke="#5a9a45" />
              </Layers>
            </PanelButton>
            <PanelButton label="Edit across layers" pressed>
              <Layers>
                <path d="M17 2l5 5-5 4-4-5z" fill="#3c3b58" stroke="#3c3b58" />
                <path d="M8 14c0-5 3-6 7-6" fill="none" stroke="#666" strokeWidth="2" />
              </Layers>
            </PanelButton>
            <PanelButton label="Layer manager view">
              <Layers>
                <path d="M8 5c4-5 10-5 14 0-4 5-10 5-14 0z" fill="#c9c9cf" />
                <circle cx="15" cy="5" r="3" fill="#4c4b5c" />
              </Layers>
            </PanelButton>
            <p className="ml-[9px] flex-1 leading-[17px]">
              Layer:
              <br />
              FO Outline
            </p>
            <button aria-label="Docker options" className="mb-[5px] flex h-[25px] w-[22px] items-center justify-center rounded border-2 border-[#3d628b] bg-[#f6f6f0]">
              <Play size={8} />
            </button>
          </div>
          <ul className="flex min-h-0 flex-1 flex-col overflow-hidden border-2 border-[#3a3a3a] bg-[#fafcf9]">
            {rows.map((row, i) => (
              <TreeRow key={i} row={row} />
            ))}
          </ul>
          <div className="flex h-[38px] shrink-0 items-center gap-[2px]">
            <PanelButton label="New layer">
              <Layers>
                <path d="M17 0l5 5-5 6-5-6z" fill="#4cae50" stroke="#4cae50" />
              </Layers>
            </PanelButton>
            <PanelButton label="New master layer">
              <Layers>
                <path d="M3 8h12l4 5H8z" fill="#ee8a2d" />
                <path d="M17 0l5 5-5 6-5-6z" fill="#4cae50" stroke="#4cae50" />
              </Layers>
            </PanelButton>
            <button aria-label="Delete" disabled className="mr-[10px] ml-auto flex">
              <svg width="16" height="20" viewBox="0 0 16 20" fill="#dcdcd2" stroke="#c3c3b9" strokeWidth="1.500" aria-hidden="true">
                <path d="M0 4h16M6 4V1h4v3M2 5h12v14H2zM6 8v8M10 8v8" />
              </svg>
            </button>
          </div>
        </div>
        <DockerTabs />
      </div>
    </section>
  );
}

function Cross({ className }: { className: string }) {
  return (
    <svg viewBox="0 0 20 20" preserveAspectRatio="none" className={`border-2 border-[#555] bg-[#fafcf9] ${className}`} stroke="#222" strokeWidth="1.500" aria-hidden="true">
      <path d="M0 0l20 20M20 0L0 20" />
    </svg>
  );
}

function Palette() {
  return (
    <aside className="flex w-[25px] shrink-0 flex-col pl-[3px]">
      <div className="flex h-[13px] items-center justify-center">{gripDots}</div>
      <button aria-label="Palette menu" className="mx-auto flex size-[19px] items-center justify-center rounded-full border border-[#a9a89c] bg-[#f2f2ec]">
        <Play size={8} />
      </button>
      <button aria-label="Set color" className="mt-px flex h-6 items-center justify-center">
        <svg width="16" height="16" viewBox="0 0 16 16" fill="none" stroke="#b0afaa" aria-hidden="true">
          <path d="M1 15l8-8" strokeWidth="3" />
          <path d="M8 4l5 5M11 5l4-4" strokeWidth="4" />
        </svg>
      </button>
      <button aria-label="Scroll colors up" className="mt-[2px] mb-[3px] flex h-[19px] items-center justify-center border border-white bg-[#efefe8]">
        <svg width="12" height="8" fill="none" stroke="#c3c2ba" strokeWidth="2" aria-hidden="true">
          <path d="M1 7l5-5 5 5" />
        </svg>
      </button>
      <button aria-label="No color" className="flex h-[23px]">
        <Cross className="h-full w-full" />
      </button>
      <div className="grid min-h-0 flex-1 auto-rows-fr">
        {palette.map((c) => (
          <button key={c} aria-label={c} className="border-b-2 border-l border-[#4a4a4a]/80" style={{ backgroundColor: c }} />
        ))}
      </div>
      <div className="mt-px">
        <ScrollButton label="Scroll colors down" />
      </div>
      <button aria-label="Expand palette" className="mt-1 mb-6 flex justify-center">
        <Play flip bar />
      </button>
    </aside>
  );
}

function StatusBar() {
  return (
    <footer className="shrink-0 border-t-2 border-[#fafaf4]">
      <div className="flex h-[58px] justify-between">
        <div className="flex flex-col pl-[5px] whitespace-nowrap">
          <div className="flex h-7 items-center">
            <span className="w-[152px]">( 3.448 , 19.448 )</span>
            <Play />
          </div>
          <div className="flex h-7 items-center gap-2">
            <span>Document color profiles: RGB: sRGB IEC61966-2.1; CMYK: U.S. Web Coated (SWOP) v2; Grayscale: Dot Gain 20%</span>
            <Play />
          </div>
        </div>
        <div className="flex pr-[217px]">
          <svg width="20" height="20" viewBox="0 0 20 20" className="mt-1 mr-[34px]" aria-hidden="true">
            <path d="M1 1h18v15H1z" fill="#8fa5d6" stroke="#55597c" strokeWidth="2" />
            <path d="M3 3h14v4H3z" fill="#d97a80" />
            <path d="M6 5h8v8H6z" fill="#fff" />
            <circle cx="10" cy="9" r="2.500" fill="none" stroke="#222" strokeWidth="1.500" />
            <path d="M5 19h10" stroke="#55597c" strokeWidth="2" />
          </svg>
          <div className="mt-1 mr-[5px] h-[18px] w-px bg-[#cbc8ae]" />
          <div className="flex flex-col gap-1 pt-[2px]">
            <div className="flex h-6 items-center gap-[7px]">
              <Ico size={20}>{bucket}</Ico>
              <Cross className="h-6 w-6" />
            </div>
            <div className="flex h-6 items-center gap-[7px]">
              <Ico size={20}>{nib}</Ico>
              <span className="size-6 border border-[#555] bg-[#282828]" />
            </div>
          </div>
        </div>
      </div>
      <div className="flex h-[2px]">
        <div className="w-[122px] bg-[#3b8f41]" />
        <div className="flex-1 bg-[#4a74bf]" />
        <div className="w-[217px] bg-[#2c7fcb]" />
      </div>
    </footer>
  );
}

export default function App() {
  return (
    <div className="flex h-screen flex-col overflow-hidden bg-[#e6e6d6] font-['DejaVu_Sans_Condensed','DejaVu_Sans',sans-serif] text-[14px] text-[#2b2b2b]">
      <MenuBar />
      <div className="flex h-[50px] shrink-0">
        <div className="flex w-[836px] shrink-0 flex-col">
          <StandardBar />
          <div className="flex-1 bg-[#eeede4]" />
        </div>
        <ObjectBar />
      </div>
      <PropertyBar />
      <div className="flex min-h-0 flex-1">
        <Toolbox />
        <Workspace />
        <ObjectManager />
        <Palette />
      </div>
      <StatusBar />
    </div>
  );
}
